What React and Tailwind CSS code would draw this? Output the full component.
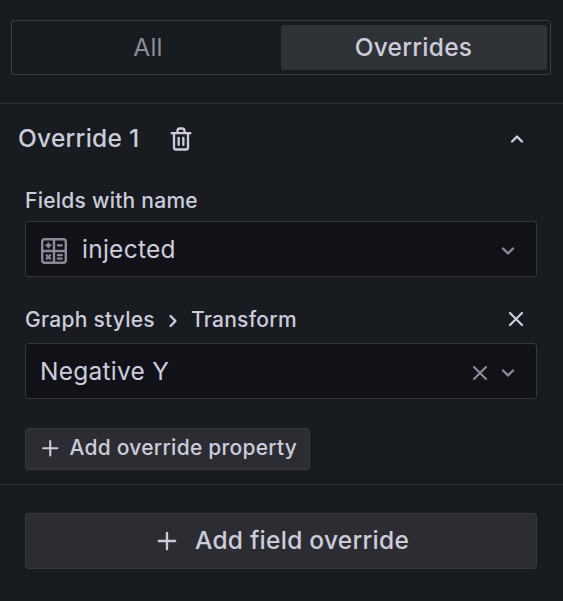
const ICONS = {
  trash:
    'M10,18a1,1,0,0,0,1-1V11a1,1,0,0,0-2,0v6A1,1,0,0,0,10,18ZM20,6H16V5a3,3,0,0,0-3-3H11A3,3,0,0,0,8,5V6H4A1,1,0,0,0,4,8H5V19a3,3,0,0,0,3,3h8a3,3,0,0,0,3-3V8h1a1,1,0,0,0,0-2ZM10,5a1,1,0,0,1,1-1h2a1,1,0,0,1,1,1V6H10Zm7,14a1,1,0,0,1-1,1H8a1,1,0,0,1-1-1V8H17Zm-3-1a1,1,0,0,0,1-1V11a1,1,0,0,0-2,0v6A1,1,0,0,0,14,18Z',
  up: 'M17,13.41,12.71,9.17a1,1,0,0,0-1.42,0L7.05,13.41a1,1,0,0,0,0,1.42,1,1,0,0,0,1.41,0L12,11.29l3.54,3.54a1,1,0,0,0,.7.29,1,1,0,0,0,.71-.29A1,1,0,0,0,17,13.41Z',
  down: 'M17,9.17a1,1,0,0,0-1.41,0L12,12.71,8.46,9.17a1,1,0,0,0-1.41,0,1,1,0,0,0,0,1.42l4.24,4.24a1,1,0,0,0,1.42,0L17,10.59A1,1,0,0,0,17,9.17Z',
  right:
    'M14.83,11.29,10.59,7.05a1,1,0,0,0-1.42,0,1,1,0,0,0,0,1.41L12.71,12,9.17,15.54a1,1,0,0,0,0,1.41,1,1,0,0,0,.71.29,1,1,0,0,0,.71-.29l4.24-4.24A1,1,0,0,0,14.83,11.29Z',
  plus: 'M19,11H13V5a1,1,0,0,0-2,0v6H5a1,1,0,0,0,0,2h6v6a1,1,0,0,0,2,0V13h6a1,1,0,0,0,0-2Z',
};

function Icon({ name, className }) {
  return (
    <svg viewBox="0 0 24 24" fill="currentColor" className={`shrink-0 ${className}`}>
      <path d={ICONS[name]} />
    </svg>
  );
}

function TimesIcon({ className }) {
  return (
    <svg
      viewBox="0 0 22 22"
      fill="none"
      stroke="currentColor"
      strokeWidth="2.2"
      strokeLinecap="round"
      className={`size-[22px] shrink-0 ${className}`}
    >
      <path d="M5 5l12 12M17 5l-12 12" />
    </svg>
  );
}

function CalculatorIcon() {
  return (
    <svg
      viewBox="0 0 26 26"
      fill="none"
      stroke="currentColor"
      strokeWidth="2.4"
      strokeLinecap="round"
      className="mt-[3px] ml-px size-[26px] shrink-0 text-[#8b8b97]"
    >
      <rect x="1.2" y="1.2" width="23.6" height="23.6" rx="2.6" />
      <path d="M13 1v24M1 13h24" />
      <path d="M5.4 7.3h4M7.4 5.3v4M16.8 7.3h4M5.7 17.2l3.4 3.4M9.1 17.2l-3.4 3.4M16.8 17.2h4M16.8 20.6h4" strokeWidth="2.2" />
    </svg>
  );
}

function Select({ children, clearable }) {
  return (
    <div className="flex h-14 items-center rounded-[3px] border border-[#36373c] bg-[#111217] pr-[14px] pl-[14px] text-[24.5px]">
      <div className="flex flex-1 items-center">{children}</div>
      <div className="flex items-center pt-[3px] text-[#8b8b97]">
        {clearable && <TimesIcon className="mr-[3px]" />}
        <Icon name="down" className="size-7" />
      </div>
    </div>
  );
}

export default function App() {
  return (
    <div className="h-[601px] w-[563px] overflow-hidden bg-[#181b1f] pt-5 font-['Inter',sans-serif] tracking-[0.016em] text-[#ccccdc]">
      <div className="mr-3 ml-[11px] flex h-[55px] items-center rounded-[3px] border border-[#3b3c42] pr-[3px] pl-[3px] text-[24.5px]">
        <div className="flex h-[45px] w-[266px] items-center justify-center text-[#8b8b97]">All</div>
        <div className="flex h-[45px] flex-1 items-center justify-center rounded-[3px] bg-[#2f3236] pr-px font-medium">
          Overrides
        </div>
      </div>

      <section className="mt-7 h-[382px] border-y border-[#2d2f34]">
        <header className="flex h-[70px] items-center pr-8 pl-[18px]">
          <h2 className="-mt-[2px] w-[149px] text-[24.5px] font-medium">Override 1</h2>
          <Icon name="trash" className="size-7" />
          <Icon name="up" className="ml-auto size-7" />
        </header>

        <div className="pr-[26px] pl-[25px]">
          <div className="flex h-[47px] items-center pt-[6px] text-[21px] font-medium">Fields with name</div>
          <Select>
            <CalculatorIcon />
            <span className="ml-[15px]">injected</span>
          </Select>

          <div className="flex h-[66px] items-center pt-[19px] text-[21px] font-medium">
            <span>Graph styles</span>
            <Icon name="right" className="mx-[4px] mt-[2px] size-7" />
            <span>Transform</span>
            <TimesIcon className="-mt-px mr-[10px] ml-auto" />
          </div>
          <Select clearable>Negative Y</Select>

          <button className="mt-[29px] flex h-[42px] w-[285px] items-center rounded-[3px] border border-[#37383d] bg-[#2c2d32] pl-3 text-[21px] font-medium tracking-[0.012em]">
            <Icon name="plus" className="-mt-[2px] mr-[7px] size-[24.5px]" />
            <span className="-mt-[2px]">Add override property</span>
          </button>
        </div>
      </section>

      <button className="mt-7 ml-[25px] flex h-14 w-[512px] items-center justify-center rounded-[3px] border border-[#37383d] bg-[#2c2d32] text-[24.5px] font-medium tracking-[0.0107em]">
        <Icon name="plus" className="mr-[14px] size-7" />
        <span className="-mt-[2px]">Add field override</span>
      </button>
    </div>
  );
}
